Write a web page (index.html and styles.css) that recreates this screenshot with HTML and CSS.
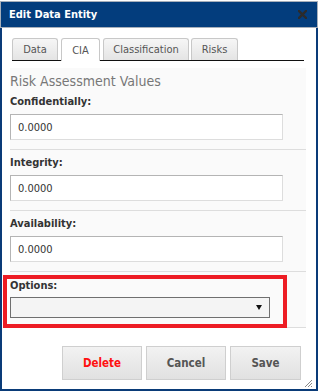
FILE: index.html
```html
<!DOCTYPE html>
<html lang="en">
<head>
    <meta charset="UTF-8">
    <meta name="viewport" content="width=device-width, initial-scale=1.0">
    <title>Edit Data Entity</title>
    <link rel="stylesheet" href="styles.css">
</head>
<body>
    <div class="dialog">
        <div class="titlebar">
            <span class="title">Edit Data Entity</span>
            <svg class="close" width="9" height="9" viewBox="0 0 9 9">
                <path d="M1 1 L8 8 M8 1 L1 8" stroke="#2b2b2b" stroke-width="2.4" stroke-linecap="square"/>
            </svg>
        </div>

        <div class="dialog-body">
            <div class="tabs">
                <div class="tab tab-data">Data</div>
                <div class="tab tab-cia active">CIA</div>
                <div class="tab tab-class">Classification</div>
                <div class="tab tab-risks">Risks</div>
            </div>

            <div class="tab-panel">
                <h3>Risk Assessment Values</h3>

                <div class="field">
                    <label>Confidentially:</label>
                    <input type="text" value="0.0000">
                </div>

                <div class="field">
                    <label>Integrity:</label>
                    <input type="text" value="0.0000">
                </div>

                <div class="field">
                    <label>Availability:</label>
                    <input type="text" value="0.0000">
                </div>

                <div class="field options-field">
                    <div class="highlight"></div>
                    <label>Options:</label>
                    <div class="select-wrap">
                        <select></select>
                    </div>
                </div>
            </div>

            <div class="actions">
                <button class="btn delete">Delete</button>
                <button class="btn">Cancel</button>
                <button class="btn">Save</button>
            </div>

            <!-- resize handle -->
            <svg class="grip" width="9" height="9" viewBox="0 0 9 9">
                <path d="M8 1 L1 8 M8 4 L4 8 M8 7 L7 8" stroke="#8a8a8a" stroke-width="1"/>
            </svg>
        </div>
    </div>
</body>
</html>
```

FILE: styles.css
```css
body {
    margin: 0;
    background-color: #fff;
    font-family: "DejaVu Sans Condensed", "DejaVu Sans", Verdana, sans-serif;
    color: #333;
}

.dialog {
    width: 318px;
    margin-top: 1px;
}

.titlebar {
    height: 25px;
    border: 1px solid #a7afba;
    background-color: #033d7d;
    display: flex;
    align-items: center;
    justify-content: space-between;
    padding: 0 10px 0 8px;
}

.title {
    color: #fff;
    font-size: 11px;
    font-weight: bold;
}

.dialog-body {
    position: relative;
    border: 2px solid #0a3b78;
    border-top: none;
    padding: 10px 10px 0 8px;
}

/* タブ */
.tabs {
    display: flex;
    align-items: flex-end;
    gap: 3px;
    height: 23px;
    box-sizing: border-box;
    margin: 0 2px;
    border-bottom: 1px solid #111;
}

.tab {
    height: 22px;
    box-sizing: border-box;
    display: flex;
    align-items: center;
    justify-content: center;
    font-size: 11px;
    color: #555;
    border: 1px solid #c8c8c8;
    border-bottom: none;
    border-radius: 3px 3px 0 0;
    background: linear-gradient(#f6f6f6, #e4e4e4);
}

.tab-data { width: 46px; }
.tab-cia { width: 39px; }
.tab-class { width: 86px; }
.tab-risks { width: 47px; margin-left: -1px; }

.tab.active {
    height: 23px;
    margin-bottom: -1px;
    background: #fff;
    position: relative;
}

.tab-panel {
    margin-top: 7px;
    padding-top: 6px;
    background-color: #fafafa;
}

h3 {
    margin: 0;
    font-size: 14px;
    line-height: 15px;
    font-weight: normal;
    color: #777;
}

.field {
    padding: 6px 0 9px;
    border-bottom: 1px solid #ddd;
}

.field label {
    display: block;
    font-size: 11px;
    line-height: 14px;
    font-weight: bold;
    color: #333;
    margin-bottom: 5px;
}

.field input {
    display: block;
    width: 273px;
    height: 26px;
    box-sizing: border-box;
    margin: 0;
    padding: 0 7px;
    border: 1px solid #ddd;
    border-top-color: #b4b4b4;
    border-left-color: #b4b4b4;
    background-color: #fff;
    font-family: inherit;
    font-size: 11px;
    color: #333;
}

.options-field {
    position: relative;
    padding: 7px 0 9px;
}

.options-field label {
    margin-bottom: 4px;
}

/* 赤い枠 */
.highlight {
    position: absolute;
    left: -7px;
    top: 3px;
    width: 284px;
    height: 53px;
    box-sizing: border-box;
    border: 4px solid #ed1c24;
}

.select-wrap {
    position: relative;
    width: 260px;
}

.select-wrap select {
    display: block;
    width: 260px;
    height: 21px;
    margin: 0;
    border: 1px solid #6f6f6f;
    border-radius: 0;
    background-color: #f4f4f4;
    appearance: none;
    -webkit-appearance: none;
}

.select-wrap::after {
    content: "";
    position: absolute;
    right: 8px;
    top: 8px;
    border-left: 3px solid transparent;
    border-right: 3px solid transparent;
    border-top: 5px solid #111;
}

.actions {
    display: flex;
    justify-content: flex-end;
    gap: 4px;
    padding: 18px 5px 9px 0;
}

.btn {
    height: 34px;
    min-width: 80px;
    padding: 0 19px;
    border: 1px solid #cfcfcf;
    background: linear-gradient(#f2f2f2, #e1e1e1);
    font-family: inherit;
    font-size: 11.5px;
    font-weight: bold;
    color: #555;
    cursor: pointer;
}

.btn:last-child {
    min-width: 71px;
}

.btn.delete {
    color: #ff1010;
}

.grip {
    position: absolute;
    right: 3px;
    bottom: 1px;
}
```
